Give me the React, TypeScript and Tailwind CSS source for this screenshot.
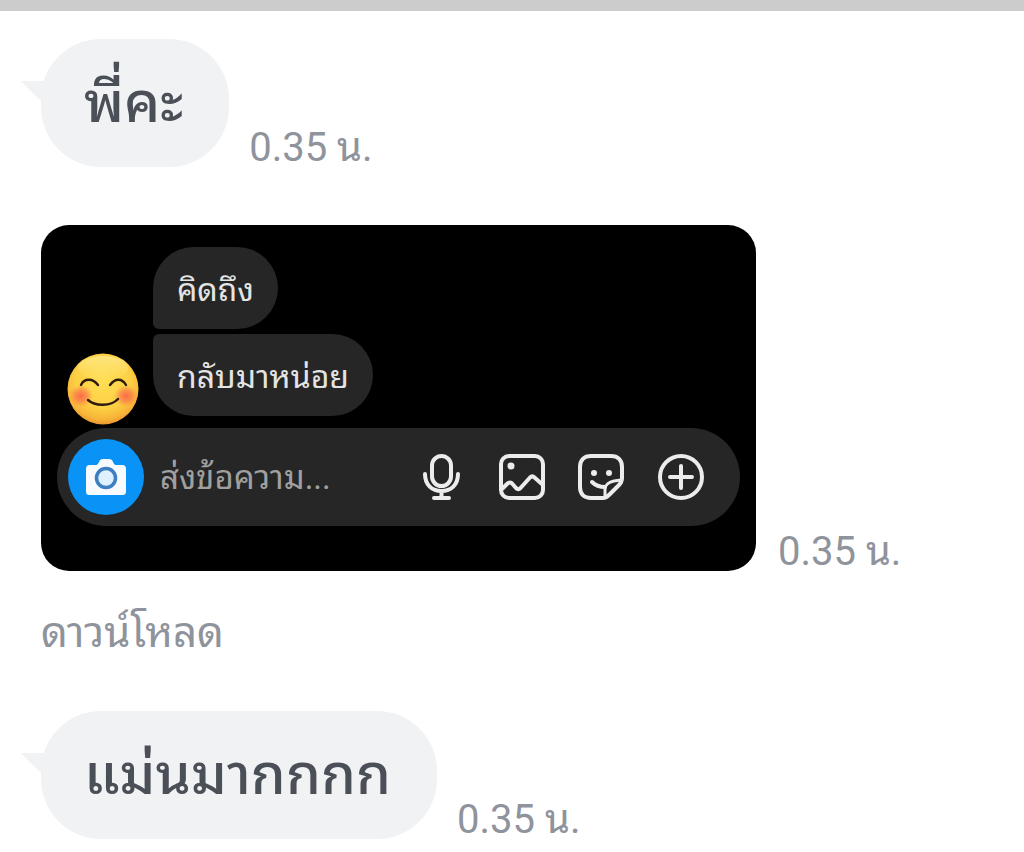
import type { ReactNode } from "react";

function TimeStamp({ time }: { time: string }) {
  return <time className="shrink-0 whitespace-nowrap text-[40px] leading-[38px] text-[#8f939c]">{time}</time>;
}

function Bubble({ children }: { children: ReactNode }) {
  return (
    <div className="relative flex h-32 items-center rounded-[60px] bg-[#f1f2f4] pr-[46px] pl-[43px]">
      {/* Tail */}
      <svg viewBox="0 0 30 30" className="absolute top-[42px] -left-5 size-[30px] fill-[#f1f2f4]">
        <path d="M0 0H30V30C26 24 20 21 0 0Z" />
      </svg>
      <p className="text-[56px] leading-[72px] font-medium text-[#4b4f58]">{children}</p>
    </div>
  );
}

function TextMessage({ text, time }: { text: string; time: string }) {
  return (
    <div className="flex items-end gap-5">
      <Bubble>{text}</Bubble>
      <TimeStamp time={time} />
    </div>
  );
}

function BlushEmoji() {
  return (
    <svg viewBox="0 0 72 72" className="size-[72px] shrink-0" role="img" aria-label="smile">
      <defs>
        <radialGradient id="face" cx="50%" cy="38%" r="64%">
          <stop offset="0" stopColor="#ffdf55" />
          <stop offset="0.6" stopColor="#fdd043" />
          <stop offset="0.85" stopColor="#f7b539" />
          <stop offset="1" stopColor="#e8902a" />
        </radialGradient>
        <radialGradient id="blush">
          <stop offset="0" stopColor="#fb5a4b" stopOpacity="0.85" />
          <stop offset="0.5" stopColor="#fb6a4b" stopOpacity="0.6" />
          <stop offset="1" stopColor="#fb7a4b" stopOpacity="0" />
        </radialGradient>
        <linearGradient id="shine" x1="0" y1="0" x2="0" y2="1">
          <stop offset="0" stopColor="#fff2a0" stopOpacity="0.6" />
          <stop offset="1" stopColor="#fff2a0" stopOpacity="0" />
        </linearGradient>
      </defs>
      <circle cx="36" cy="36" r="35.5" fill="url(#face)" />
      <ellipse cx="36" cy="15" rx="25" ry="12" fill="url(#shine)" />
      <ellipse cx="14" cy="43" rx="12" ry="11" fill="url(#blush)" />
      <ellipse cx="59" cy="43" rx="12" ry="11" fill="url(#blush)" />
      <g fill="none" stroke="#2e1c10" strokeWidth="2.4" strokeLinecap="round">
        <path d="M14 32C17 25 26 25 31 32" />
        <path d="M43 32C48 25 55 25 59 32" />
        <path d="M21 47C28 53.500 44 53.500 51 46" />
      </g>
    </svg>
  );
}

function CameraIcon() {
  return (
    <svg viewBox="0 0 42 38" className="h-[38px] w-[42px]">
      <path
        fill="#f7fbff"
        d="M5 7H11C12.500 7 13 6 14 4C15 1.800 16 1 18 1H24C26 1 27 1.800 28 4C29 6 29.500 7 31 7H37C40 7 41 8.500 41 11V33C41 36 40 37 37 37H5C2 37 1 36 1 33V11C1 8.500 2 7 5 7Z"
      />
      <circle cx="21" cy="20" r="9.500" fill="#dff1ff" stroke="#3d7fc0" strokeWidth="3.500" />
    </svg>
  );
}

const iconClass = "size-12 fill-none stroke-[#ececec] stroke-[4]";

function MicIcon() {
  return (
    <svg viewBox="0 0 48 48" className={iconClass} strokeLinecap="round">
      <rect x="15" y="3" width="19" height="30" rx="9.500" />
      <path d="M8 21C8 32 15 38 24.500 38C34 38 41 32 41 21M24.500 38V45M17 45H32" />
    </svg>
  );
}

function GalleryIcon() {
  return (
    <svg viewBox="0 0 48 48" className={iconClass} strokeLinejoin="round">
      <rect x="4" y="3" width="42" height="42" rx="8" />
      <circle cx="14" cy="13" r="3.500" className="fill-[#ececec] stroke-none" />
      <path d="M5 36L10 31C12 29 14 29 15.500 31L19 35C20.500 36.500 22 36.500 23.500 35L33 24.500C34.500 23 36 23 37.500 24.500L46 32" />
    </svg>
  );
}

function StickerIcon() {
  return (
    <svg viewBox="0 0 48 48" className={iconClass} strokeLinecap="round" strokeLinejoin="round">
      <path d="M14 3H34C41 3 45 7 45 14V25C45 28 44 30 42 32L33 41C31 43 29 45 26 45H14C7 45 3 41 3 34V14C3 7 7 3 14 3Z" />
      <path d="M28 43V36C28 32 32 29 37 28L44 27" strokeWidth="3" />
      <path d="M15 29C18 32 22 34 28 34" />
      <circle cx="17" cy="20" r="3" className="fill-[#ececec] stroke-none" />
      <circle cx="32" cy="20" r="3" className="fill-[#ececec] stroke-none" />
    </svg>
  );
}

function PlusIcon() {
  return (
    <svg viewBox="0 0 48 48" className={iconClass} strokeLinecap="round">
      <circle cx="24" cy="24" r="21" />
      <path d="M24 13V35M13 24H35" />
    </svg>
  );
}

const actions = [
  { label: "ไมโครโฟน", Icon: MicIcon },
  { label: "รูปภาพ", Icon: GalleryIcon },
  { label: "สติกเกอร์", Icon: StickerIcon },
  { label: "เพิ่มเติม", Icon: PlusIcon },
];

function PhotoCard() {
  return (
    <div className="min-w-0 max-w-[715px] flex-1 rounded-[28px] bg-black pt-[22px] pr-4 pb-[45px] pl-4">
      <div className="flex items-end gap-[14px] pl-[10px]">
        <BlushEmoji />
        <div className="flex flex-col items-start gap-[5px] pb-[9px] text-[32px] text-[#e4e4e4]">
          <p className="flex h-[82px] items-center rounded-[41px] rounded-bl-md bg-[#262626] px-6 pt-1">คิดถึง</p>
          <p className="flex h-[82px] items-center rounded-[41px] rounded-tl-md bg-[#262626] px-6 pt-1">กลับมาหน่อย</p>
        </div>
      </div>

      {/* Composer */}
      <div className="mt-[3px] flex h-[98px] items-center rounded-full bg-[#262626] pr-[35px] pl-[11px]">
        <button
          aria-label="กล้อง"
          className="flex size-[76px] shrink-0 items-center justify-center rounded-full bg-[#0a93f6]"
        >
          <CameraIcon />
        </button>
        <input
          type="text"
          aria-label="ส่งข้อความ"
          placeholder="ส่งข้อความ..."
          className="ml-4 h-16 min-w-0 flex-1 bg-transparent text-[33px] text-white outline-none placeholder:text-[#a0a0a0]"
        />
        <div className="flex shrink-0 gap-8">
          {actions.map(({ label, Icon }) => (
            <button key={label} aria-label={label}>
              <Icon />
            </button>
          ))}
        </div>
      </div>
    </div>
  );
}

export default function App() {
  return (
    <div className="min-h-screen bg-white font-[Roboto,'Noto_Sans_Thai_Looped','Noto_Looped_Thai',Loma,Waree,Garuda,Umpush,Sarabun,'Droid_Sans_Thai','Noto_Serif_Thai',sans-serif]">
      <div className="h-[11px] bg-[#cccccc]" />
      <main className="px-[41px] pt-7 pb-3">
        <TextMessage text="พี่คะ" time="0.35 น." />

        <div className="mt-[58px] flex items-end gap-[22px]">
          <PhotoCard />
          <TimeStamp time="0.35 น." />
        </div>

        <a href="#download" className="mt-9 mb-[52px] block w-fit text-[42px] leading-[52px] text-[#8f939c]">
          ดาวน์โหลด
        </a>

        <TextMessage text="แม่นมากกกก" time="0.35 น." />
      </main>
    </div>
  );
}
